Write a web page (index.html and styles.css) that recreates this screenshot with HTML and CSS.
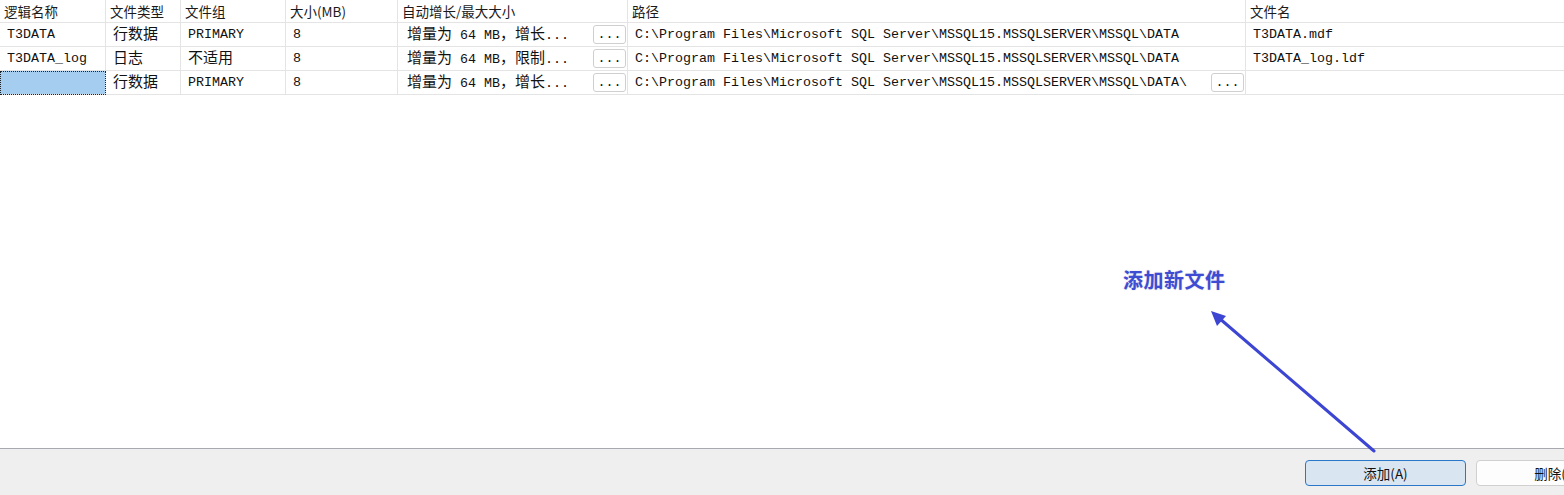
FILE: index.html
```html
<!DOCTYPE html>
<html lang="zh">
<head>
<meta charset="utf-8">
<title>数据库文件</title>
<link rel="stylesheet" href="styles.css">
</head>
<body>
<div class="page">
  <main class="grid-area">
    <table class="files">
      <colgroup>
        <col class="c1"><col class="c2"><col class="c3"><col class="c4"><col class="c5"><col class="c6"><col class="c7">
      </colgroup>
      <thead>
        <tr>
          <th>逻辑名称</th>
          <th>文件类型</th>
          <th>文件组</th>
          <th>大小(MB)</th>
          <th>自动增长/最大大小</th>
          <th>路径</th>
          <th>文件名</th>
        </tr>
      </thead>
      <tbody>
        <tr>
          <td><div class="cell"><span class="tx">T3DATA</span></div></td>
          <td><div class="cell"><span class="tx"><span class="cj">行数据</span></span></div></td>
          <td><div class="cell"><span class="tx">PRIMARY</span></div></td>
          <td><div class="cell"><span class="tx">8</span></div></td>
          <td class="grow"><div class="cell split"><span class="tx"><span class="cj">增量为</span> 64 MB<span class="cj">，增长</span>...</span><button class="dots">...</button></div></td>
          <td><div class="cell"><span class="tx">C:\Program Files\Microsoft SQL Server\MSSQL15.MSSQLSERVER\MSSQL\DATA</span></div></td>
          <td><div class="cell"><span class="tx">T3DATA.mdf</span></div></td>
        </tr>
        <tr>
          <td><div class="cell"><span class="tx">T3DATA_log</span></div></td>
          <td><div class="cell"><span class="tx"><span class="cj">日志</span></span></div></td>
          <td><div class="cell"><span class="tx"><span class="cj">不适用</span></span></div></td>
          <td><div class="cell"><span class="tx">8</span></div></td>
          <td class="grow"><div class="cell split"><span class="tx"><span class="cj">增量为</span> 64 MB<span class="cj">，限制</span>...</span><button class="dots">...</button></div></td>
          <td><div class="cell"><span class="tx">C:\Program Files\Microsoft SQL Server\MSSQL15.MSSQLSERVER\MSSQL\DATA</span></div></td>
          <td><div class="cell"><span class="tx">T3DATA_log.ldf</span></div></td>
        </tr>
        <tr>
          <td class="sel"><div class="cell"></div></td>
          <td><div class="cell"><span class="tx"><span class="cj">行数据</span></span></div></td>
          <td><div class="cell"><span class="tx">PRIMARY</span></div></td>
          <td><div class="cell"><span class="tx">8</span></div></td>
          <td class="grow"><div class="cell split"><span class="tx"><span class="cj">增量为</span> 64 MB<span class="cj">，增长</span>...</span><button class="dots">...</button></div></td>
          <td class="path"><div class="cell split"><span class="tx">C:\Program Files\Microsoft SQL Server\MSSQL15.MSSQLSERVER\MSSQL\DATA\</span><button class="dots">...</button></div></td>
          <td><div class="cell"></div></td>
        </tr>
      </tbody>
    </table>

    <div class="note">添加新文件</div>
    <svg class="arrow" width="1564" height="495" viewBox="0 0 1564 495" aria-hidden="true">
      <line x1="1374" y1="451" x2="1219" y2="318" stroke="#3c46d2" stroke-width="3" stroke-linecap="round"/>
      <polygon points="1211,311 1226,316 1217,326" fill="#3c46d2"/>
    </svg>
  </main>
  <footer class="footer">
    <button class="btn primary">添加(A)</button>
    <button class="btn">删除(R)</button>
  </footer>
</div>
</body>
</html>
```

FILE: styles.css
```css
* { box-sizing: border-box; }
html, body { margin: 0; padding: 0; background: #ffffff; }
body {
  width: 1564px;
  height: 495px;
  overflow: hidden;
  font-family: "Noto Sans CJK SC", "Noto Sans", sans-serif;
  color: #111;
}
.page { display: flex; flex-direction: column; height: 495px; }
.grid-area { position: relative; height: 448px; background: #fff; }

.files {
  width: 1564px;
  table-layout: fixed;
  border-collapse: separate;
  border-spacing: 0;
}
.c1 { width: 106px; }
.c2 { width: 75px; }
.c3 { width: 105px; }
.c4 { width: 112px; }
.c5 { width: 230px; }
.c6 { width: 618px; }
.c7 { width: 318px; }

.files th {
  height: 23px;
  padding: 0 4px;
  text-align: left;
  font-weight: 400;
  font-size: 13.5px;
  line-height: 22px;
  color: #1a1a1a;
  border-right: 1px solid #e4e4e4;
  border-bottom: 1px solid #e4e4e4;
  white-space: nowrap;
  overflow: hidden;
  vertical-align: top;
}
.files td {
  height: 24px;
  padding: 0 6px 0 7px;
  font-family: "Liberation Mono", "Noto Sans CJK SC", monospace;
  font-size: 13.33px;
  color: #111;
  border-right: 1px solid #e4e4e4;
  border-bottom: 1px solid #e4e4e4;
  white-space: nowrap;
  overflow: hidden;
  vertical-align: top;
}
.files th:last-child, .files td:last-child { border-right: none; }
.files td.grow { padding-left: 9px; padding-right: 1px; }
.files td.path { padding-right: 1px; }

.cell {
  height: 23px;
  display: flex;
  align-items: center;
  overflow: hidden;
}
.split { justify-content: space-between; }
.tx {
  display: block;
  white-space: pre;
  line-height: 16px;
}

.cj {
  font-family: "Noto Sans CJK SC", sans-serif;
  font-size: 15px;
  font-weight: 400;
  line-height: 16px;
}

.files td.sel {
  background: #a5cdf0;
  outline: 1px dotted #222;
  outline-offset: -1px;
}

.dots {
  width: 33px;
  height: 19px;
  padding: 0;
  margin: 0;
  background: #fff;
  border: 1px solid #cfcfcf;
  border-radius: 3px;
  font-family: "Liberation Mono", monospace;
  font-size: 13.33px;
  line-height: 17px;
  color: #111;
  text-align: center;
  flex: none;
}

.note {
  position: absolute;
  left: 1123px;
  top: 266px;
  font-family: "Noto Sans CJK SC", sans-serif;
  font-size: 20px;
  line-height: 28px;
  font-weight: 700;
  letter-spacing: 0.5px;
  color: #3e4cd3;
  text-shadow: 0 0 2px #d8d8e8, 0 0 1px #e4e4ee;
}
.arrow { position: absolute; left: 0; top: 0; pointer-events: none; z-index: 2; }

.footer {
  height: 47px;
  background: #efefef;
  border-top: 1px solid #a8a8b0;
  display: flex;
  align-items: flex-start;
  gap: 10px;
  padding: 11px 0 0 1305px;
  overflow: hidden;
}
.btn {
  flex: none;
  width: 161px;
  height: 26px;
  padding: 0;
  background: #fdfdfd;
  border: 1px solid #d0d0d0;
  border-radius: 4px;
  font-family: "Noto Sans CJK SC", sans-serif;
  font-size: 13.5px;
  line-height: 24px;
  color: #111;
  text-align: center;
}
.btn.primary {
  background: #d9e6f2;
  border-color: #2a77c8;
}
```
